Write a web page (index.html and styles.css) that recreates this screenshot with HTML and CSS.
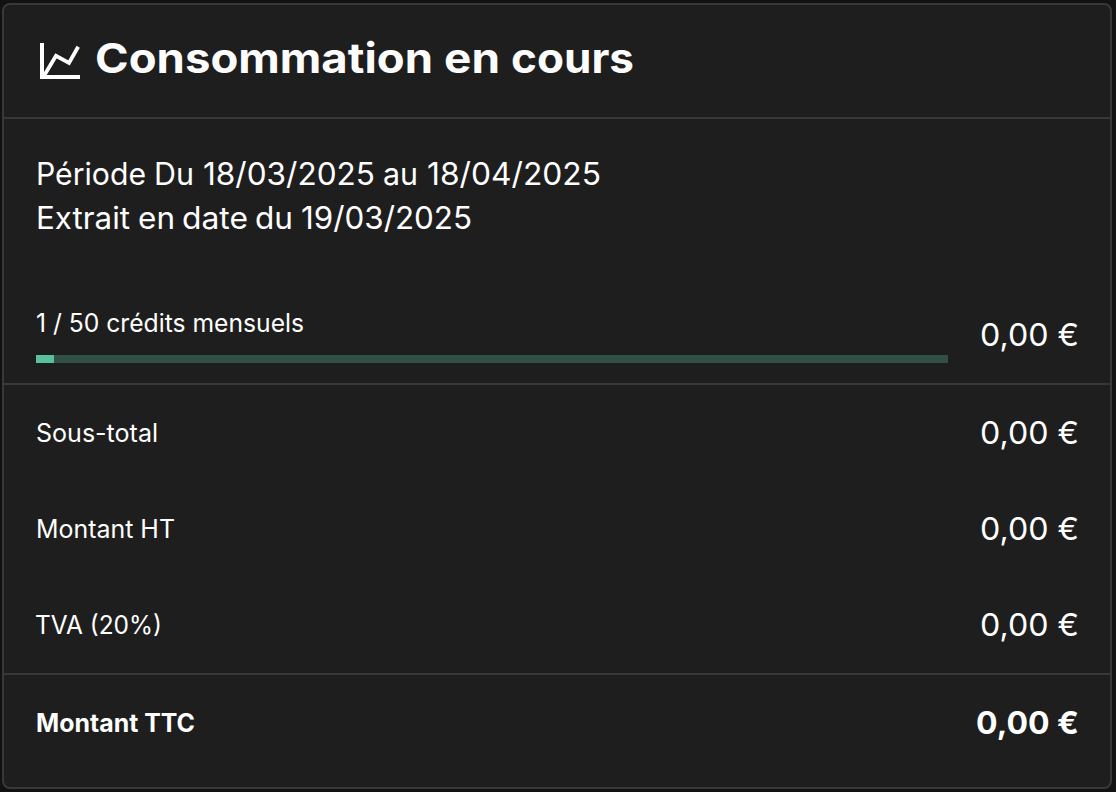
FILE: index.html
```html
<!DOCTYPE html>
<html lang="fr">
<head>
<meta charset="utf-8">
<title>Consommation en cours</title>
<link rel="stylesheet" href="styles.css">
</head>
<body>
<main class="card">
  <header class="card-header">
    <svg class="chart-icon" viewBox="0 0 44 40" fill="none" stroke="currentColor" stroke-width="4">
      <path d="M6 2V36H44"/><path stroke-width="3.800" d="M8.500 34L20 14.800L33 22L42.200 5.700"/>
    </svg>
    <h1><svg class="fit" width="540" height="60"><text y="40"><tspan x="-1" textLength="338" lengthAdjust="spacingAndGlyphs">Consommation</tspan> <tspan x="348" textLength="56" lengthAdjust="spacingAndGlyphs">en</tspan> <tspan x="415" textLength="123" lengthAdjust="spacingAndGlyphs">cours</tspan></text></svg></h1>
  </header>
  <section class="period">
    <svg class="fit" width="570" height="44"><text y="32.500"><tspan x="0" textLength="110" lengthAdjust="spacingAndGlyphs">Période</tspan> <tspan x="118" textLength="40" lengthAdjust="spacingAndGlyphs">Du</tspan> <tspan x="167" textLength="172" lengthAdjust="spacingAndGlyphs">18/03/2025</tspan> <tspan x="347" textLength="35" lengthAdjust="spacingAndGlyphs">au</tspan> <tspan x="391" textLength="174" lengthAdjust="spacingAndGlyphs">18/04/2025</tspan></text></svg>
    <svg class="fit" width="570" height="44"><text y="32.500"><tspan x="0" textLength="94" lengthAdjust="spacingAndGlyphs">Extrait</tspan> <tspan x="102" textLength="37" lengthAdjust="spacingAndGlyphs">en</tspan> <tspan x="146" textLength="66" lengthAdjust="spacingAndGlyphs">date</tspan> <tspan x="219" textLength="38" lengthAdjust="spacingAndGlyphs">du</tspan> <tspan x="265" textLength="171" lengthAdjust="spacingAndGlyphs">19/03/2025</tspan></text></svg>
  </section>
  <section class="usage">
    <div class="quota">
      <svg class="fit label" width="300" height="40"><text x="0" y="28" textLength="268" lengthAdjust="spacingAndGlyphs">1 / 50 crédits mensuels</text></svg>
      <div class="track"><div class="bar" style="width:2%"></div></div>
    </div>
    <svg class="fit price" width="102" height="48"><text x="4" y="34" textLength="99" lengthAdjust="spacingAndGlyphs">0,00 €</text></svg>
  </section>
  <section class="amounts">
    <div class="row"><svg class="fit label" width="300" height="40"><text x="0" y="28" textLength="122" lengthAdjust="spacingAndGlyphs">Sous-total</text></svg><svg class="fit price" width="102" height="48"><text x="4" y="34" textLength="99" lengthAdjust="spacingAndGlyphs">0,00 €</text></svg></div>
    <div class="row"><svg class="fit label" width="300" height="40"><text x="0" y="28" textLength="139" lengthAdjust="spacingAndGlyphs">Montant HT</text></svg><svg class="fit price" width="102" height="48"><text x="4" y="34" textLength="99" lengthAdjust="spacingAndGlyphs">0,00 €</text></svg></div>
    <div class="row"><svg class="fit label" width="300" height="40"><text x="-1" y="28" textLength="127" lengthAdjust="spacingAndGlyphs">TVA (20%)</text></svg><svg class="fit price" width="102" height="48"><text x="4" y="34" textLength="99" lengthAdjust="spacingAndGlyphs">0,00 €</text></svg></div>
  </section>
  <footer class="row total"><svg class="fit label" width="300" height="40"><text x="0" y="28" textLength="159" lengthAdjust="spacingAndGlyphs">Montant TTC</text></svg><svg class="fit price" width="102" height="48"><text x="0" y="34" textLength="103" lengthAdjust="spacingAndGlyphs">0,00 €</text></svg></footer>
</main>
</body>
</html>
```

FILE: styles.css
```css
* { box-sizing: border-box; }
body {
  margin: 0;
  height: 792px;
  padding: 3px 4px 3px 2px;
  background: #121212;
  color: #fff;
  font-family: Inter, "Noto Sans", sans-serif;
}
.card {
  height: 786px;
  background: #1e1e1e;
  border: 2px solid #383838;
  border-radius: 8px;
}
.card-header {
  display: flex;
  gap: 16px;
  height: 114px;
  padding: 28px 32px;
  border-bottom: 2px solid #383838;
}
.chart-icon { width: 44px; height: 40px; margin-top: 8px; }
.card-header h1 { margin: 0; color: #fcfcfc; font: 700 41px/1 Inter, sans-serif; }
.fit { display: block; fill: currentColor; overflow: visible; }
.period { height: 180px; padding: 33px 32px 0; font-size: 31px; }
.usage {
  display: flex;
  gap: 28px;
  height: 86px;
  padding: 5px 32px 0;
  border-bottom: 2px solid #383838;
}
.quota { width: 912px; }
.track { height: 8px; margin-top: 11px; background: #304f45; }
.bar { height: 100%; background: #5abf9e; }
.label { font-size: 25px; }
.price { font-size: 31px; }
.usage .price { margin-top: 8px; }
.amounts { height: 290px; border-bottom: 2px solid #383838; }
.row { display: flex; justify-content: space-between; align-items: center; height: 96px; padding: 2px 32px 0; }
.total { font-weight: 700; }
```
